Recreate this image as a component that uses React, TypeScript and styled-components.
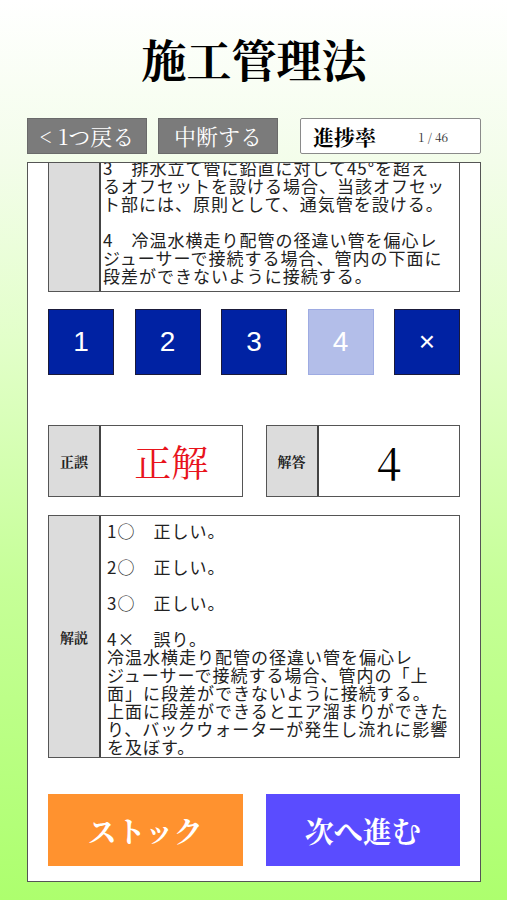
import React from 'react';
import styled, { createGlobalStyle } from 'styled-components';

const serif = `"Noto Serif CJK JP", "Liberation Serif", "Noto Sans CJK JP", serif`;
const gothic = `"Liberation Sans", "Noto Sans CJK JP", sans-serif`;
const jpGothic = `"Noto Sans CJK JP", "Liberation Sans", sans-serif`;

const GlobalStyle = createGlobalStyle`
  html, body {
    margin: 0;
    padding: 0;
  }
  body {
    min-height: 900px;
    background: linear-gradient(to bottom, #ffffff 0%, #f3fdea 18%, #e2ffc9 38%, #c6ff98 65%, #adff6e 100%);
  }
`;

const Page = styled.div`
  width: 507px;
  height: 900px;
  box-sizing: border-box;
  padding: 36px 26px 0 27px;
  display: flex;
  flex-direction: column;
  overflow: hidden;
`;

const Title = styled.h1`
  margin: 0;
  height: 46px;
  line-height: 46px;
  text-align: center;
  font-family: ${serif};
  font-size: 45px;
  font-weight: 700;
  color: #000;
`;

const Toolbar = styled.div`
  margin-top: 36px;
  height: 36px;
  display: flex;
  align-items: stretch;
`;

const NavButton = styled.button`
  width: 120px;
  margin-right: 11px;
  padding: 0;
  border: 1px solid #6a6a6a;
  background: #7b7b7b;
  color: #fff;
  font-family: ${serif};
  font-size: 22px;
  line-height: 34px;
`;

const Progress = styled.div`
  margin-left: 11px;
  flex: 1;
  box-sizing: border-box;
  border: 1.5px solid #8a8a8a;
  border-radius: 2px;
  background: #fff;
  display: flex;
  align-items: center;
  padding-left: 12px;
`;

const ProgressLabel = styled.span`
  font-family: ${serif};
  font-size: 21px;
  font-weight: 700;
  width: 105px;
`;

const ProgressCount = styled.span`
  font-family: ${serif};
  font-size: 12px;
  color: #333;
`;

const Panel = styled.div`
  margin-top: 8px;
  height: 720px;
  box-sizing: border-box;
  border: 1.5px solid #555;
  background: #fff;
  overflow: hidden;
  padding: 0 20px;
  display: flex;
  flex-direction: column;
`;

const Box = styled.div<{ $top?: number }>`
  margin-top: ${p => p.$top ?? 0}px;
  display: flex;
  box-sizing: border-box;
  border: 1.5px solid #555;
  background: #fff;
`;

const Label = styled.div<{ $width?: number }>`
  width: ${p => p.$width ?? 50}px;
  flex-shrink: 0;
  background: #dcdcdc;
  border-right: 2px solid #444;
  display: flex;
  align-items: center;
  justify-content: center;
  font-family: ${serif};
  font-size: 14px;
  font-weight: 700;
  color: #222;
`;

const BodyText = styled.div<{ $pad: string }>`
  flex: 1;
  padding: ${p => p.$pad};
  font-family: ${jpGothic};
  font-size: 17px;
  letter-spacing: 1px;
  line-height: 18px;
  color: #222;
  white-space: nowrap;
`;

const Choices = styled.div`
  margin-top: 17px;
  display: flex;
  justify-content: space-between;
`;

const Choice = styled.button<{ $selected?: boolean }>`
  width: 66px;
  height: 66px;
  padding: 0;
  box-sizing: border-box;
  border: 1.5px solid ${p => (p.$selected ? '#9eabe2' : '#1a1a3a')};
  background: ${p => (p.$selected ? '#b3bee9' : '#0022a3')};
  color: #fff;
  font-family: ${gothic};
  font-size: 28px;
`;

const ResultRow = styled.div`
  margin-top: 50px;
  height: 72px;
  display: flex;
  gap: 23px;
`;

const ResultBox = styled(Box)`
  flex: 1;
`;

const ResultValue = styled.div<{ $color: string; $size: number }>`
  flex: 1;
  display: flex;
  align-items: center;
  justify-content: center;
  font-family: ${serif};
  font-size: ${p => p.$size}px;
  color: ${p => p.$color};
`;

const Actions = styled.div`
  margin-top: 36px;
  height: 72px;
  display: flex;
  gap: 23px;
`;

const ActionButton = styled.button<{ $bg: string }>`
  flex: 1;
  border: none;
  background: ${p => p.$bg};
  color: #fff;
  font-family: ${serif};
  font-size: 29px;
  font-weight: 700;
`;

const choices = ['1', '2', '3', '4', '×'];

export default function App() {
  return (
    <>
      <GlobalStyle />
      <Page>
        <Title>施工管理法</Title>
        <Toolbar>
          <NavButton>&lt; 1つ戻る</NavButton>
          <NavButton>中断する</NavButton>
          <Progress>
            <ProgressLabel>進捗率</ProgressLabel>
            <ProgressCount>1 / 46</ProgressCount>
          </Progress>
        </Toolbar>
        <Panel>
          <Box $top={-5}>
            <Label />
            <BodyText $pad="0 0 6px 2px">
              3　排水立て管に鉛直に対して45°を超え<br />
              るオフセットを設ける場合、当該オフセッ<br />
              ト部には、原則として、通気管を設ける。<br />
              <br />
              4　冷温水横走り配管の径違い管を偏心レ<br />
              ジューサーで接続する場合、管内の下面に<br />
              段差ができないように接続する。
            </BodyText>
          </Box>
          <Choices>
            {choices.map(c => (
              <Choice key={c} $selected={c === '4'}>
                {c}
              </Choice>
            ))}
          </Choices>
          <ResultRow>
            <ResultBox>
              <Label>正誤</Label>
              <ResultValue $color="#e8141c" $size={37}>正解</ResultValue>
            </ResultBox>
            <ResultBox>
              <Label>解答</Label>
              <ResultValue $color="#000" $size={44}>4</ResultValue>
            </ResultBox>
          </ResultRow>
          <Box $top={18}>
            <Label>解説</Label>
            <BodyText $pad="6px 0 1px 6px">
              1○　正しい。<br />
              <br />
              2○　正しい。<br />
              <br />
              3○　正しい。<br />
              <br />
              4×　誤り。<br />
              冷温水横走り配管の径違い管を偏心レ<br />
              ジューサーで接続する場合、管内の「上<br />
              面」に段差ができないように接続する。<br />
              上面に段差ができるとエア溜まりができた<br />
              り、バックウォーターが発生し流れに影響<br />
              を及ぼす。
            </BodyText>
          </Box>
          <Actions>
            <ActionButton $bg="#ff922f">ストック</ActionButton>
            <ActionButton $bg="#5a4cff">次へ進む</ActionButton>
          </Actions>
        </Panel>
      </Page>
    </>
  );
}
